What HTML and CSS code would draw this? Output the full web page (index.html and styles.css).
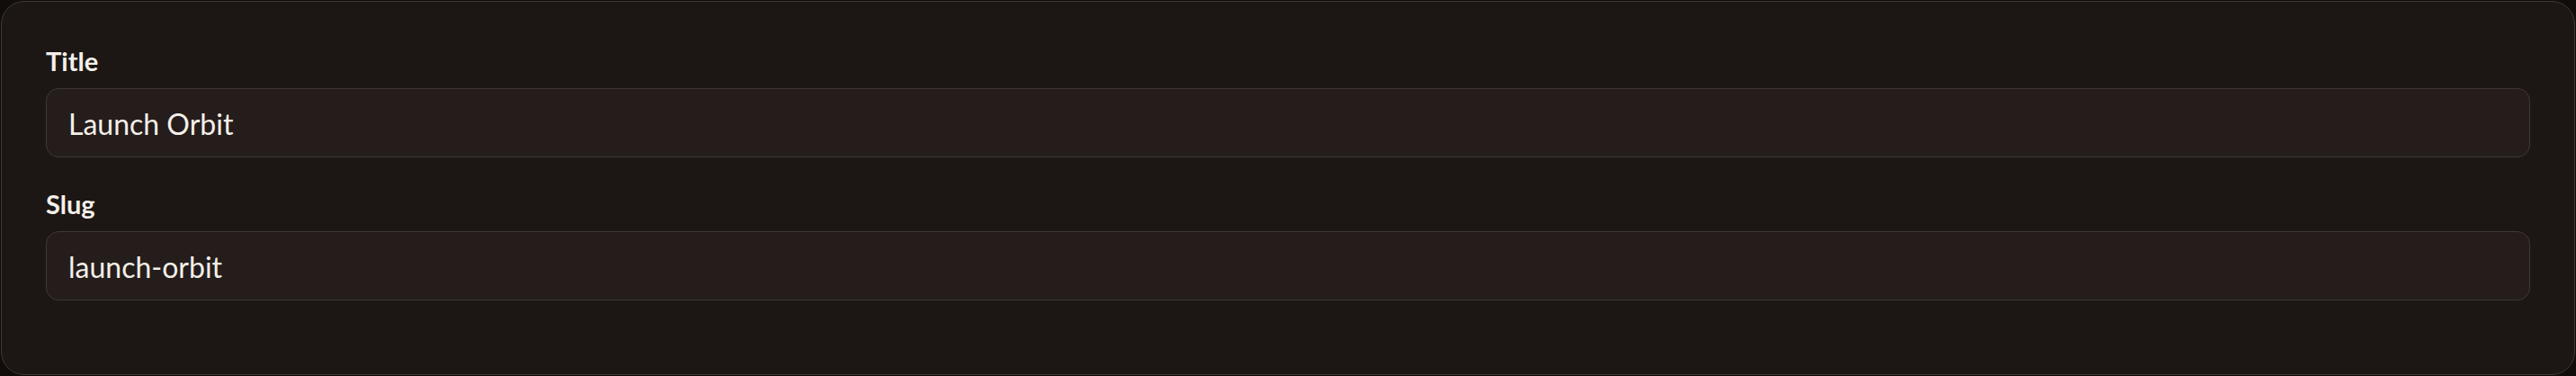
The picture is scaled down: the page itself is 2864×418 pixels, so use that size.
FILE: index.html
```html
<!DOCTYPE html>
<html lang="en">
<head>
<meta charset="utf-8">
<title>Edit</title>
<link rel="stylesheet" href="styles.css">
</head>
<body>
<form class="card">
  <div class="field">
    <label class="label" for="title">Title</label>
    <input class="input" id="title" type="text" value="Launch Orbit">
  </div>
  <div class="field">
    <label class="label" for="slug">Slug</label>
    <input class="input" id="slug" type="text" value="launch-orbit">
  </div>
</form>
</body>
</html>
```

FILE: styles.css
```css
* { box-sizing: border-box; }
html, body { height: 100%; }
body {
  margin: 0;
  padding: 1px;
  background: #110d0b;
  font-family: Lato, "Noto Sans", sans-serif;
  color: #f4efe9;
}
.card {
  display: flex;
  flex-direction: column;
  gap: 31px;
  height: 416px;
  margin: 0;
  padding: 45px 49px 81px;
  background: #1c1714;
  border: 1px solid #403734;
  border-radius: 26px;
}
.field {
  display: flex;
  flex-direction: column;
  gap: 9px;
}
.label {
  font-size: 29px;
  line-height: 42px;
  font-weight: 700;
  color: #f4efe9;
}
.input {
  display: block;
  width: 100%;
  height: 77px;
  padding: 2px 24px 0;
  background: #251d1b;
  border: 1px solid #403734;
  border-radius: 14px;
  color: #f4efe9;
  font-family: Lato, "Noto Sans", sans-serif;
  font-size: 32px;
  outline: none;
}
```
